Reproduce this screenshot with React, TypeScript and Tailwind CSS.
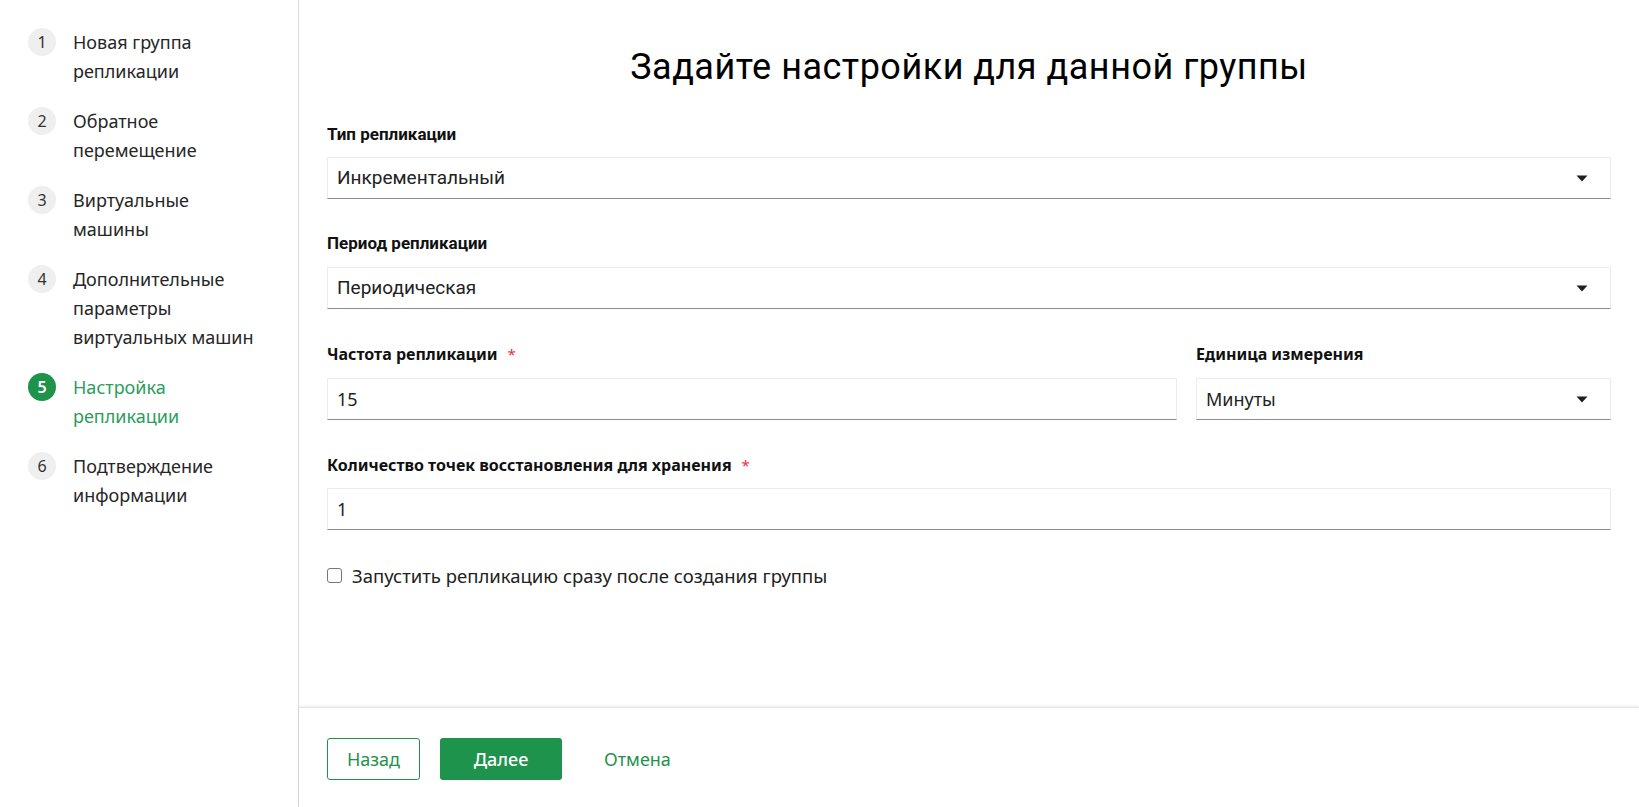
import React from 'react';

const steps = [
  { n: 1, lines: ['Новая группа', 'репликации'] },
  { n: 2, lines: ['Обратное', 'перемещение'] },
  { n: 3, lines: ['Виртуальные', 'машины'] },
  { n: 4, lines: ['Дополнительные', 'параметры', 'виртуальных машин'] },
  { n: 5, lines: ['Настройка', 'репликации'], active: true },
  { n: 6, lines: ['Подтверждение', 'информации'] },
];

const body = { fontFamily: '"Noto Sans", "Open Sans", sans-serif' };
const narrow = { fontFamily: 'Roboto, "Liberation Sans", sans-serif' };

function Caret() {
  return (
    <svg width="12" height="7" viewBox="0 0 12 7" className="shrink-0">
      <path d="M0.5 0.5 L11.5 0.5 L6 6.5 Z" fill="#1f1f1f" />
    </svg>
  );
}

function Box({ value, select, condensed }: { value: string; select?: boolean; condensed?: boolean }) {
  return (
    <div className="h-[42px] flex items-center justify-between bg-white border border-[#ececec] border-b-[#8a8a8a] pl-[9px] pr-[22px]">
      <span
        className={condensed ? 'text-[19px] text-[#222]' : 'text-[18px] text-[#222]'}
        style={condensed ? narrow : body}
      >
        {value}
      </span>
      {select && <Caret />}
    </div>
  );
}

function Label({ text, required, condensed }: { text: string; required?: boolean; condensed?: boolean }) {
  return (
    <div className="h-[20px] flex items-center text-[16px] font-bold text-[#111]" style={condensed ? { ...narrow, fontSize: 17 } : body}>
      {text}
      {required && <span className="ml-[10px] text-[#e8334a] font-normal text-[15px]">*</span>}
    </div>
  );
}

export default function App() {
  return (
    <div className="flex h-[807px] w-full bg-white text-[#222]" style={body}>
      {/* Steps */}
      <aside className="w-[299px] shrink-0 border-r border-[#dcdcdc] pt-[28px] pl-[28px] flex flex-col gap-[21px]">
        {steps.map((s) => (
          <div key={s.n} className="flex items-start">
            <div
              className={
                s.active
                  ? 'w-[28px] h-[28px] rounded-full bg-[#1d934b] text-white flex items-center justify-center text-[16px] font-semibold shrink-0'
                  : 'w-[28px] h-[28px] rounded-full bg-[#efefef] text-[#333] flex items-center justify-center text-[16px] shrink-0'
              }
            >
              {s.n}
            </div>
            <div className={s.active ? 'ml-[17px] text-[18px] leading-[29px] text-[#2a9d5a]' : 'ml-[17px] text-[18px] leading-[29px] text-[#262626]'}>
              {s.lines.map((l) => (
                <div key={l} className="whitespace-nowrap">{l}</div>
              ))}
            </div>
          </div>
        ))}
      </aside>

      {/* Main */}
      <main className="flex-1 flex flex-col">
        <div className="flex-1 px-[28px] pt-[46px]">
          <h1 className="text-center text-[36px] leading-[42px] text-black tracking-[0.5px]" style={narrow}>
            Задайте настройки для данной группы
          </h1>

          <div className="mt-[37px] flex flex-col gap-[35px]">
            <div className="flex flex-col gap-[12px]">
              <Label text="Тип репликации" condensed />
              <Box value="Инкрементальный" select condensed />
            </div>
            <div className="flex flex-col gap-[13px]">
              <Label text="Период репликации" condensed />
              <Box value="Периодическая" select condensed />
            </div>
            <div className="grid grid-cols-[850px_1fr] gap-[19px]">
              <div className="flex flex-col gap-[14px]">
                <Label text="Частота репликации" required />
                <Box value="15" />
              </div>
              <div className="flex flex-col gap-[14px]">
                <Label text="Единица измерения" />
                <Box value="Минуты" select />
              </div>
            </div>
            <div className="flex flex-col gap-[13px]">
              <Label text="Количество точек восстановления для хранения" required />
              <Box value="1" />
            </div>
            <label className="flex items-center gap-[10px] -mt-[3px]">
              <span className="w-[15px] h-[15px] rounded-[3px] border border-[#767676] bg-white" />
              <span className="text-[18.5px] text-[#222]">Запустить репликацию сразу после создания группы</span>
            </label>
          </div>
        </div>

        <footer className="h-[100px] border-t border-[#e4e4e4] shadow-[0_-1px_3px_rgba(0,0,0,0.08)] px-[28px] pt-[30px] flex items-start gap-[20px]">
          <button className="h-[42px] w-[93px] rounded-[3px] border border-[#1d934b] text-[#1d934b] text-[18px] bg-white">
            Назад
          </button>
          <button className="h-[42px] w-[122px] rounded-[3px] bg-[#1d934b] text-white text-[18px] font-medium">
            Далее
          </button>
          <button className="h-[42px] px-[22px] text-[#1d934b] text-[18px]">Отмена</button>
        </footer>
      </main>
    </div>
  );
}
